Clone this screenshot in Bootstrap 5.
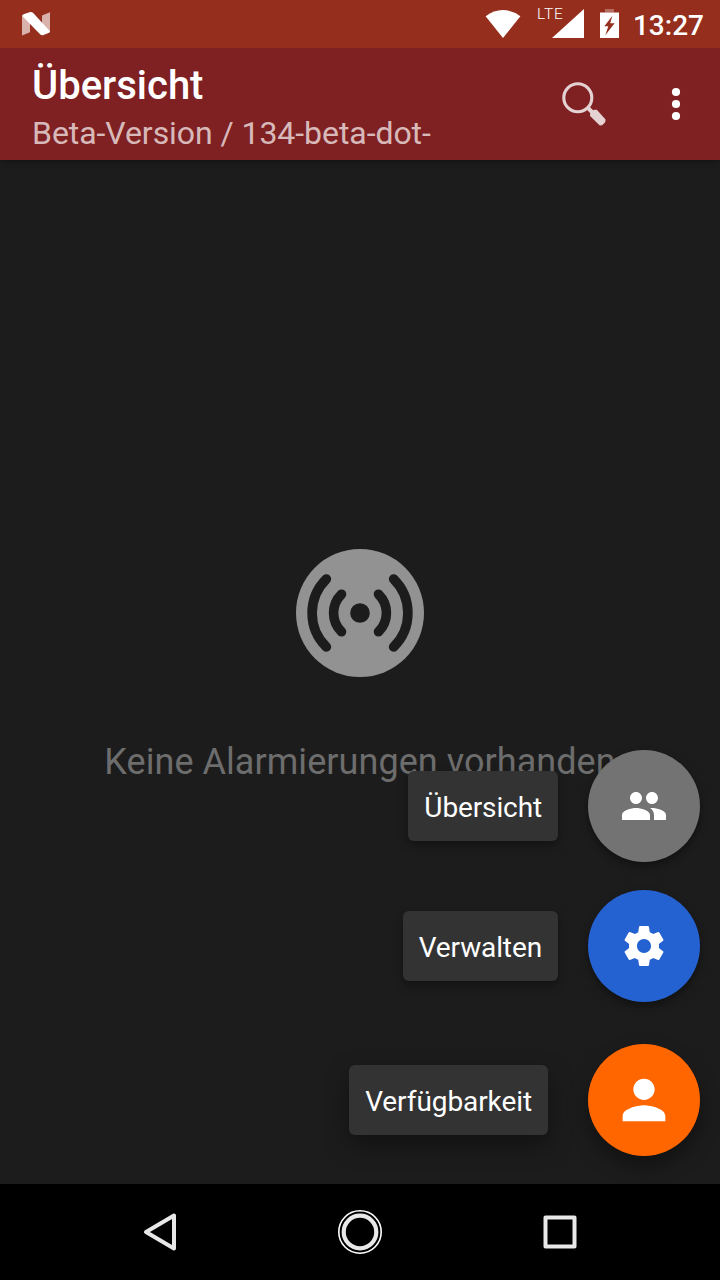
<!DOCTYPE html>
<html lang="de">
<head>
<meta charset="utf-8">
<meta name="viewport" content="width=device-width, initial-scale=1">
<title>Übersicht</title>
<link href="https://cdn.jsdelivr.net/npm/bootstrap@5.3.0/dist/css/bootstrap.min.css" rel="stylesheet">
<style>
  body { font-family: Roboto, sans-serif; background: #1c1c1c; color: #fff; }
  svg { display: block; flex: none; }
  .status-bar { height: 48px; background: #952e1d; padding: 0 16px 0 20px; z-index: 2; }
  .signal { margin-left: 31px; }
  .battery { margin-left: 16px; }
  .network-label { font-size: 15.5px; line-height: 16px; font-weight: 300; letter-spacing: .9px; left: -15px; top: 6px; }
  .clock { font-size: 28px; line-height: 48px; font-weight: 500; padding-top: 2px; margin-left: 14px; }
  .app-bar { height: 112px; background: #7f2022; padding: 0 24px 0 32px; box-shadow: 0 1px 6px rgba(0,0,0,.35); }
  .app-title { font-size: 40px; line-height: 48px; font-weight: 500; margin-top: 14px; }
  .app-subtitle { font-size: 32px; line-height: 40px; color: rgba(255,255,255,.7); margin-top: 3px; letter-spacing: -.06px; white-space: nowrap; }
  .app-actions { gap: 50px; }
  .icon-btn { border: 0; padding: 0; background: none; color: #fff; }
  .empty-state { padding-bottom: 12px; }
  .empty-text { font-size: 36px; line-height: 44px; color: #6d6d6d; margin-top: 63px; letter-spacing: .05px; }
  .speed-dial { right: 20px; bottom: 28px; }
  .dial-label { height: 70px; padding: 3px 16px 0; border-radius: 6px; background: #333; font-size: 28px; line-height: 68px; letter-spacing: -.12px; white-space: nowrap; box-shadow: 0 4px 10px rgba(0,0,0,.35); }
  .dial-btn { width: 112px; height: 112px; box-shadow: 0 4px 9px rgba(0,0,0,.4); }
  .dial-main .dial-label { letter-spacing: -.08px; box-shadow: 0 10px 24px rgba(0,0,0,.38); }
  .dial-main .dial-btn { box-shadow: 0 10px 20px rgba(0,0,0,.38); }
  .fab-gray { background: #737373; }
  .fab-blue { background: #2461d1; }
  .fab-orange { background: #ff6600; }
  .gap-mini { gap: 30px; }
  .gap-main { gap: 40px; margin-top: 14px; }
  .dial-stack { gap: 28px; }
  .system-nav { height: 96px; background: #000; padding: 0 112px; }
</style>
</head>
<body class="vh-100 d-flex flex-column overflow-hidden">

<div class="status-bar position-relative d-flex align-items-start flex-shrink-0">
  <svg width="32" height="48" viewBox="0 0 32 48" fill="#fff">
    <path d="M2 15.500l8 7v9.700l-8 3.300zM22 15.400l8-3.100v19.900l-8-7.500z" opacity=".63"/>
    <path d="M2 15.800l1.500-1.600L9.500 12.200q2.200-.6 3.700.9L30 31.200q-.2 1.400-1.500 1.900l-5 2q-2 .6-3.400-.8z"/>
  </svg>
  <svg class="ms-auto" width="36" height="48" viewBox="0 0 36 48" fill="#fff"><path d="M.6 16.200Q17.500 3.800 35.400 16.200L18 38z"/></svg>
  <div class="signal position-relative">
    <svg width="32" height="48" viewBox="0 0 32 48" fill="#fff"><path d="M32 9v29H0z"/></svg>
    <span class="network-label position-absolute">LTE</span>
  </div>
  <svg class="battery" width="19" height="48" viewBox="0 0 19 48"><path d="M5 9h9v3.500H5z" fill="#b56d61"/><path d="M0 12.500h19V38H0z" fill="#fff"/><path d="M12.300 16L4.300 26.300h4L5.300 35.200 14.600 23.200H10.200z" fill="#952e1d"/></svg>
  <span class="clock">13:27</span>
</div>

<header class="app-bar d-flex align-items-start flex-shrink-0">
  <div class="me-auto">
    <h1 class="app-title mb-0">Übersicht</h1>
    <div class="app-subtitle">Beta-Version / 134-beta-dot-</div>
  </div>
  <div class="app-actions d-flex align-self-center">
    <button class="icon-btn" aria-label="Suchen">
      <svg width="46" height="46" viewBox="0 0 46 46" fill="none" stroke="#e5d2d3">
        <circle cx="17.800" cy="16.800" r="14" stroke-width="3.100"/>
        <path d="M27.500 26.500l5 5" stroke-width="4"/>
        <path d="M31.300 32l3-2.300h2l8.300 9.300-.3 1.700-2.600 2.500-1.700.2-9-8.800z" fill="#e5d2d3" stroke-width="2" stroke-linejoin="round"/>
      </svg>
    </button>
    <button class="icon-btn" aria-label="Mehr">
      <svg width="40" height="46" viewBox="0 0 40 46" fill="#fff"><circle cx="20" cy="11" r="4.100"/><circle cx="20" cy="23" r="4.100"/><circle cx="20" cy="35" r="4.100"/></svg>
    </button>
  </div>
</header>

<main class="empty-state flex-grow-1 position-relative d-flex flex-column align-items-center justify-content-center">
  <svg width="128" height="128" viewBox="0 0 128 128" fill="none">
    <circle cx="64" cy="64" r="64" fill="#929292"/>
    <circle cx="64" cy="64" r="9.800" fill="#1c1c1c"/>
    <g stroke="#1c1c1c" stroke-width="9.600" stroke-linecap="round">
      <path d="M45.500 45.200a26.300 26.300 0 0 0 0 37.600M82.500 45.200a26.300 26.300 0 0 1 0 37.600"/>
      <path d="M30.400 30a47.600 47.600 0 0 0 0 68M97.600 30a47.600 47.600 0 0 1 0 68"/>
    </g>
  </svg>
  <div class="empty-text">Keine Alarmierungen vorhanden</div>

  <div class="speed-dial dial-stack position-absolute d-flex flex-column align-items-end">
    <div class="gap-mini d-flex align-items-center">
      <span class="dial-label">Übersicht</span>
      <button class="dial-btn fab-gray icon-btn rounded-circle d-flex align-items-center justify-content-center" aria-label="Übersicht">
        <svg width="48" height="48" viewBox="0 0 24 24" fill="#fff"><path d="M16 11c1.660 0 2.990-1.340 2.990-3S17.660 5 16 5c-1.660 0-3 1.340-3 3s1.340 3 3 3zm-8 0c1.660 0 2.990-1.340 2.990-3S9.660 5 8 5C6.340 5 5 6.340 5 8s1.340 3 3 3zm0 2c-2.330 0-7 1.170-7 3.500V19h14v-2.500c0-2.330-4.670-3.500-7-3.500zm8 0c-.290 0-.620.020-.970.050 1.160.840 1.970 1.970 1.970 3.450V19h6v-2.500c0-2.330-4.670-3.500-7-3.500z"/></svg>
      </button>
    </div>
    <div class="gap-mini d-flex align-items-center">
      <span class="dial-label">Verwalten</span>
      <button class="dial-btn fab-blue icon-btn rounded-circle d-flex align-items-center justify-content-center" aria-label="Verwalten">
        <svg width="48" height="48" viewBox="0 0 24 24" fill="#fff"><path d="M19.430 12.980c.04-.32.07-.64.07-.98s-.03-.66-.07-.98l2.110-1.650c.19-.15.24-.42.12-.64l-2-3.460c-.12-.22-.39-.3-.61-.22l-2.490 1c-.52-.4-1.080-.73-1.690-.98l-.38-2.650C14.460 2.180 14.250 2 14 2h-4c-.25 0-.46.18-.49.420l-.38 2.650c-.61.25-1.170.59-1.690.98l-2.490-1c-.23-.09-.49 0-.61.22l-2 3.460c-.13.22-.07.49.12.64l2.110 1.650c-.04.32-.07.65-.07.980s.03.66.07.98l-2.110 1.650c-.19.15-.24.42-.12.64l2 3.460c.12.22.39.3.61.22l2.490-1c.52.4 1.080.73 1.690.98l.38 2.650c.03.24.24.42.49.42h4c.25 0 .46-.18.49-.42l.38-2.650c.61-.25 1.170-.59 1.690-.98l2.490 1c.23.09.49 0 .61-.22l2-3.460c.12-.22.07-.49-.12-.64l-2.110-1.650zM12 15.500c-1.930 0-3.500-1.570-3.500-3.500s1.570-3.500 3.500-3.500 3.500 1.570 3.500 3.500-1.570 3.500-3.500 3.500z"/></svg>
      </button>
    </div>
    <div class="dial-main gap-main d-flex align-items-center">
      <span class="dial-label">Verfügbarkeit</span>
      <button class="dial-btn fab-orange icon-btn rounded-circle d-flex align-items-center justify-content-center" aria-label="Verfügbarkeit">
        <svg width="64" height="64" viewBox="0 0 24 24" fill="#fff"><path d="M12 12c2.210 0 4-1.790 4-4s-1.790-4-4-4-4 1.790-4 4 1.790 4 4 4zm0 2c-2.670 0-8 1.340-8 4v2h16v-2c0-2.660-5.330-4-8-4z"/></svg>
      </button>
    </div>
  </div>
</main>

<nav class="system-nav position-relative d-flex align-items-center justify-content-between flex-shrink-0">
  <svg width="96" height="48" viewBox="0 0 96 48" fill="none" stroke="#e8e8e8" stroke-width="4" stroke-linejoin="round"><path d="M62 7.500v33L34 24z"/></svg>
  <svg width="48" height="48" viewBox="0 0 48 48" fill="none"><circle cx="24" cy="24" r="21.200" stroke="#fff" stroke-width="1.600"/><circle cx="24" cy="24" r="16.300" stroke="#e8e8e8" stroke-width="4.200"/></svg>
  <svg width="96" height="48" viewBox="0 0 96 48" fill="none" stroke="#e8e8e8" stroke-width="4" stroke-linejoin="round"><path d="M33.500 9.500h29v29h-29z"/></svg>
</nav>

<script src="https://cdn.jsdelivr.net/npm/bootstrap@5.3.0/dist/js/bootstrap.bundle.min.js"></script>
</body>
</html>
